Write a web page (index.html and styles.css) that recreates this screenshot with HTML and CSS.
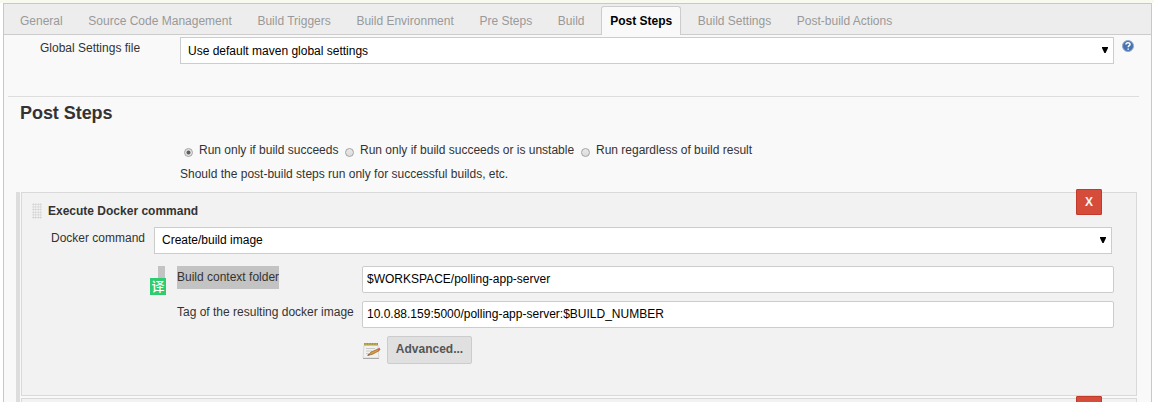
FILE: index.html
```html
<!DOCTYPE html>
<html lang="en">
<head>
<meta charset="utf-8">
<title>Job configuration</title>
<link rel="stylesheet" href="styles.css">
</head>
<body>
<main class="panel">
  <nav class="tabs">
    <a class="tab">General</a><a class="tab">Source Code Management</a><a class="tab">Build Triggers</a><a class="tab">Build Environment</a><a class="tab">Pre Steps</a><a class="tab">Build</a><a class="tab active">Post Steps</a><a class="tab">Build Settings</a><a class="tab">Post-build Actions</a>
  </nav>
  <section class="settings">
    <label class="settings-label">Global Settings file</label>
    <div class="select">Use default maven global settings<svg class="arrow" width="6" height="6" viewBox="0 0 6 6"><path d="M0 0h6v1L3.600 6H2.400L0 1z"/></svg></div>
    <svg class="help" width="12" height="12" viewBox="0 0 12 12"><circle cx="6" cy="6" r="5.500" fill="#4673b0" stroke="#8fa9cd"/><path d="M4 4.600C4 2.200 8 2.300 8 4.400C8 5.700 6.200 5.600 6.200 7.300M6.200 8.400V9.700" fill="none" stroke="#fff" stroke-width="1.500"/></svg>
  </section>
  <h2 class="heading">Post Steps</h2>
  <div class="radios">
    <span class="radio checked"></span><span class="r1">Run only if build succeeds</span>
    <span class="radio"></span><span class="r2">Run only if build succeeds or is unstable</span>
    <span class="radio"></span><span>Run regardless of build result</span>
  </div>
  <p class="note">Should the post-build steps run only for successful builds, etc.</p>
  <div class="steps">
    <section class="step">
      <button class="delete">X</button>
      <header class="step-head"><span class="grip"></span><b>Execute Docker command</b></header>
      <div class="command">
        <label class="command-label">Docker command</label>
        <div class="select">Create/build image<svg class="arrow" width="6" height="6" viewBox="0 0 6 6"><path d="M0 0h6v1L3.600 6H2.400L0 1z"/></svg></div>
      </div>
      <div class="field">
        <span class="selected-gap"></span>
        <span class="translate">译</span>
        <label><mark>Build context folder</mark></label>
        <div class="input">$WORKSPACE/polling-app-server</div>
      </div>
      <div class="field">
        <label class="plain">Tag of the resulting docker image</label>
        <div class="input">10.0.88.159:5000/polling-app-server:$BUILD_NUMBER</div>
      </div>
      <div class="advanced">
        <svg class="notepad" width="19" height="18" viewBox="0 0 19 18"><path d="M2 3h14l.8 13H1z" fill="#f1f1f0" stroke="#d2d2d0" stroke-width=".8"/><path d="M1 16.500h16" stroke="#a9a9a9"/><path d="M2 1h14v2.500H2z" fill="#b9a94f"/><path d="M3 1v1.500M5.500 1v1.500M8 1v1.500M10.500 1v1.500M13 1v1.500M15.500 1v1.500" stroke="#94853a" stroke-width=".7"/><path d="M4 6.500h9M4 9h6M4 11.500h3" stroke="#cacaca"/><path d="M6.500 13l2.500-3L16 7l1 1.800L10 12.500z" fill="#d99b3e" stroke="#8e6430" stroke-width=".7"/><path d="M15.500 6.800l2-1 1 2-1.500 1z" fill="#dd5a50"/><path d="M5.500 13.300l2-.5" stroke="#4b4238"/></svg>
        <button class="button">Advanced...</button>
      </div>
    </section>
    <section class="step next"><button class="delete" aria-label="Delete"></button></section>
  </div>
</main>
</body>
</html>
```
FILE: styles.css
```css
* { box-sizing: border-box; }
body {
  margin: 0;
  padding: 3px 2px 0 3px;
  height: 402px;
  overflow: hidden;
  background: linear-gradient(#f8faf0 3px, #fff 3px);
  color: #333;
  font: 12px/14px "Liberation Sans", Arial, sans-serif;
}
.panel {
  height: 399px;
  overflow: hidden;
  background: #f9f9f9;
  border: 1px solid #c8c8c8;
  border-bottom: 0;
}
.tabs {
  display: flex;
  height: 31px;
  padding: 2px 0 0 4px;
  background: #ededed;
  border-bottom: 1px solid #ccc;
}
.tab {
  height: 29px;
  margin: 0 3.65px 0 4px;
  padding: 7px 8px 0;
  border: 1px solid transparent;
  border-bottom: 0;
  white-space: nowrap;
  color: #999;
}
.tab:first-child { margin-left: 3px; }
.active {
  background: #f9f9f9;
  border-color: #ccc;
  border-radius: 3px 3px 0 0;
  color: #000;
  font-weight: bold;
}
.settings {
  display: grid;
  grid-template-columns: 140px 934px 20px;
  height: 62px;
  margin: 0 12px 0 4px;
  padding: 2px 0 0 32px;
  border-bottom: 1px solid #ddd;
}
.settings-label { padding-top: 4px; }
.help { margin: 3px 0 0 8px; }
.select {
  display: flex;
  align-items: center;
  justify-content: space-between;
  height: 27px;
  padding: 0 5px 0 7px;
  background: #fff;
  border: 1px solid #ccc;
  color: #000;
}
.arrow { margin-top: -1px; }
.heading {
  height: 46px;
  margin: 0;
  padding: 5px 0 0 16px;
  font-size: 18px;
  line-height: 22px;
  letter-spacing: -.05px;
}
.radios {
  display: flex;
  height: 24px;
  padding-left: 180px;
}
.radio {
  flex: none;
  width: 9px;
  height: 9px;
  margin: 5px 6px 0 0;
  border: 1px solid #a3a3a3;
  border-radius: 50%;
  background: linear-gradient(#e9e9e9, #dcdcdc);
}
.checked { background: radial-gradient(circle, #606060 0 1.6px, #e4e4e4 2.4px); }
.r1 { width: 146px; }
.r2 { width: 221px; }
.note { height: 25px; margin: 0; padding-left: 176px; }
.steps {
  width: 1121px;
  margin-left: 12px;
  border-left: 4px solid #ddd;
  padding-left: 1px;
}
.step {
  position: relative;
  height: 204px;
  margin-bottom: 2px;
  padding-top: 10px;
  background: #f2f2f2;
  border: 1px solid #d9d9d9;
}
.delete {
  position: absolute;
  top: -4px;
  right: 34px;
  width: 26px;
  height: 26px;
  padding: 0;
  background: #d54c3b;
  border: 1px solid #c23a2a;
  border-radius: 1px;
  color: #f4f4f4;
  font: bold 12px/24px "Liberation Sans", Arial, sans-serif;
}
.next .delete { top: -3px; }
.step-head { display: flex; height: 24px; padding-left: 10px; }
.step-head b { padding-top: 1px; margin-left: 6px; }
.grip {
  width: 10px;
  height: 16px;
  background: radial-gradient(circle, #d0d0d0 0 .7px, #f9f9f9 1.3px) 0 0 / 2.5px 2.65px;
}
.command { display: grid; grid-template-columns: 103px 958px; height: 39px; padding-left: 29px; }
.command-label { padding-top: 4px; }
.command .select { padding-bottom: 2px; }
.command .arrow { margin-top: 1px; }
.field {
  position: relative;
  display: grid;
  grid-template-columns: 185px 752px;
  height: 35px;
  padding-left: 155px;
}
.plain { padding-top: 4px; }
mark {
  display: inline-block;
  height: 23px;
  padding-top: 4px;
  background: #c3c3c3;
  color: #333;
}
.input {
  height: 27px;
  padding: 5px 4px;
  background: #fff;
  border: 1px solid #ccc;
  border-radius: 2px;
  color: #000;
}
.selected-gap {
  position: absolute;
  left: 136px;
  top: 0;
  width: 7px;
  height: 13px;
  background: #c3c3c3;
}
.translate {
  position: absolute;
  left: 128px;
  top: 12px;
  width: 16px;
  height: 17px;
  background: #2ecc71;
  color: #fff;
  font: 500 13px/16px "Noto Sans CJK SC", sans-serif;
  text-align: center;
}
.advanced { display: flex; padding-left: 340px; }
.notepad { margin: 6px 6px 0 0; }
.button {
  width: 85px;
  height: 28px;
  padding: 0 0 2px;
  background: #e0e0e0;
  border: 1px solid #ccc;
  border-radius: 2px;
  color: #555;
  font: bold 12px/14px "Liberation Sans", Arial, sans-serif;
}
```
